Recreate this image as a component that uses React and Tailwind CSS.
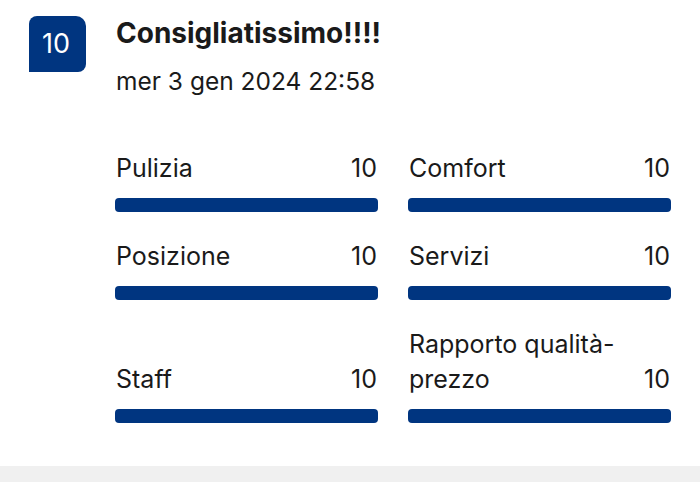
export default function App() {
  const items = [
    { label: "Pulizia", score: 10 },
    { label: "Comfort", score: 10 },
    { label: "Posizione", score: 10 },
    { label: "Servizi", score: 10 },
    { label: "Staff", score: 10 },
    { label: "Rapporto qualità-prezzo", score: 10 },
  ];
  return (
    <div className="w-[700px] h-[500px] bg-white text-[#1a1a1a] overflow-hidden" style={{ fontFamily: "Inter, 'Noto Sans', sans-serif" }}>
      <div className="flex pl-[29px] pt-[16px]">
        <div className="w-[57px] h-[56px] shrink-0 bg-[#003580] text-white rounded-tl-[8px] rounded-tr-[10px] rounded-br-[8px] flex items-center justify-center text-[27px] pr-[3px]">10</div>
        <div className="ml-[30px]">
          <div className="text-[28px] font-bold leading-[34px]">Consigliatissimo!!!!</div>
          <div className="text-[24.5px] leading-[34px] mt-[14px]">mer 3 gen 2024 22:58</div>
        </div>
      </div>
      <div className="grid grid-cols-[263px_263px] gap-x-[30px] gap-y-[27px] pl-[115px] mt-[53px]">
        {items.map((it) => (
          <div key={it.label} className="flex flex-col justify-end">
            <div className="flex justify-between items-end text-[25px] leading-[35px] px-[1px]">
              <span className="max-w-[220px]">{it.label}</span>
              <span>{it.score}</span>
            </div>
            <div className="h-[14px] mt-[12px] bg-[#003580] rounded-[4px]" style={{ width: `${it.score * 10}%` }} />
          </div>
        ))}
      </div>
      <div className="mt-[43px] h-[16px] bg-[#f0f0f0]" />
    </div>
  );
}
